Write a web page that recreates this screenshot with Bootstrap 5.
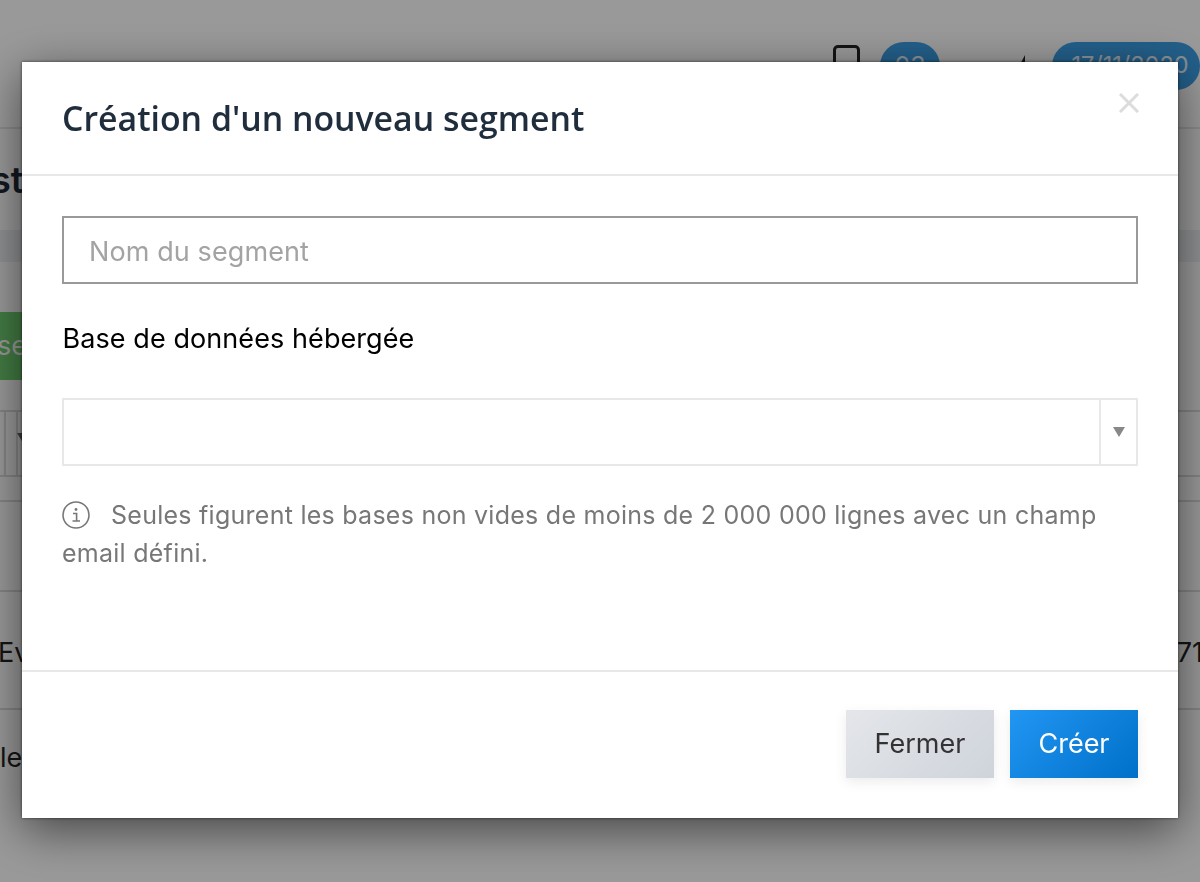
<!DOCTYPE html>
<html lang="fr">
<head>
<meta charset="utf-8">
<title>Création d'un nouveau segment</title>
<link href="https://cdn.jsdelivr.net/npm/bootstrap@5.3.0/dist/css/bootstrap.min.css" rel="stylesheet">
<style>
html, body { height: 882px; overflow: hidden; }
body { font-family: Inter, "Liberation Sans", sans-serif; background: #fff; color: #1f2937; }
.pg-wrap { width: 1200px; height: 882px; overflow: hidden; }
.pg-top { height: 129px; border-bottom: 2px solid #e5e7eb; padding-top: 42px; }
.pg-box { width: 27px; height: 30px; margin: 3px 20px 0 0; border: 3px solid #222; border-radius: 5px; }
.pg-pill { height: 48px; border-radius: 24px; background: #3b9fe6; color: #e8f2fa; font-size: 25px; line-height: 48px; text-align: center; }
.pg-count { width: 60px; margin-right: 74px; }
.pg-tick { width: 38px; height: 30px; margin-top: 10px; }
.pg-date { width: 148px; white-space: nowrap; font-size: 23.5px; padding-left: 8px; line-height: 46px; }
.pg-title { height: 101px; font-size: 36px; font-weight: 600; line-height: 50px; padding-top: 26px; text-indent: -9px; }
.pg-band { height: 32px; background: #eef0f2; }
.pg-green { width: 60px; height: 68px; margin-top: 50px; background: #6fcf70; color: #fff; font-size: 27px; line-height: 68px; text-indent: -3px; }
.pg-head { height: 67px; margin-top: 30px; padding-left: 4px; border-top: 2px solid #d9dcdf; border-bottom: 2px solid #d9dcdf; }
.pg-cell { width: 14px; height: 100%; border-left: 2px solid #d9dcdf; border-right: 2px solid #d9dcdf; }
.pg-caret { margin: 21px 0 0 -1px; }
.pg-row { font-size: 27px; color: #222; border-bottom: 2px solid #d9dcdf; }
.pg-r1 { height: 25px; }
.pg-r2 { height: 90px; }
.pg-r3 { height: 118px; line-height: 122px; }
.pg-r4 { height: 100px; line-height: 96px; border-bottom: 0; }
.pg-r3 span:first-child { margin-left: -2px; }
.pg-r3 span:last-child { margin-right: -3px; }
.modal-backdrop.scrim { --bs-backdrop-opacity: .4; z-index: 1040; }
.modal.sheet { z-index: 1050; display: block; }
.sheet .modal-dialog { max-width: none; width: 1156px; margin: 62px 22px 0; }
.sheet .modal-content { height: 756px; border: 0; border-radius: 0; box-shadow: 0 0 3px rgba(0,0,0,.6), 0 12px 44px rgba(0,0,0,.55); }
.sheet .modal-header { height: 114px; padding: 0 40px; border-bottom: 2px solid #e8e8e8; border-radius: 0; align-items: flex-start; }
.sheet-title { font-family: "Open Sans", "Liberation Sans", sans-serif; font-size: 33.85px; font-weight: 600; color: #1f2d3d; line-height: 40px; margin: 36px 0 0; }
.sheet-close { margin: 31px -1px 0 0; padding: 0; width: 20px; height: 20px; background: none; border: 0; line-height: 0; }
.sheet .modal-body { height: 494px; flex: none; padding: 40px 40px 0; }
.seg-input.form-control { height: 68px; border: 2px solid #999; border-radius: 0; font-size: 27px; padding: 2px 25px 0; color: #333; letter-spacing: .1px; }
.seg-input::placeholder { color: #a3a3a3; }
.seg-label { display: block; margin: 37px 0 0; padding-left: .5px; font-size: 27px; line-height: 36px; color: #000; letter-spacing: .08px; }
.seg-select { height: 68px; margin-top: 41px; border: 2px solid #e8e8e8; }
.seg-arrow { width: 37px; border-left: 2px solid #e8e8e8; }
.seg-note { margin: 30px 0 0; font-size: 25px; line-height: 38px; color: #777; letter-spacing: .26px; }
.seg-info { width: 28px; height: 28px; margin: 0 21px 4px 0; vertical-align: middle; }
.sheet .modal-footer { height: 148px; padding: 38px 40px 0 0; border-top: 2px solid #e8e8e8; border-radius: 0; align-items: flex-start; justify-content: flex-end; gap: 16px; flex-wrap: nowrap; }
.sheet .modal-footer .btn { margin: 0; height: 68px; border: 0; border-radius: 0; font-size: 27px; padding: 0; box-shadow: 0 4px 12px rgba(0,0,0,.08); }
.act-close { width: 148px; background: linear-gradient(135deg, #e4e6ea, #cfd4db); color: #333; }
.act-make { width: 128px; background: linear-gradient(135deg, #2196f3, #0070c9); color: #fff; }
</style>
</head>
<body>
<div class="pg-wrap">
  <div class="pg-top d-flex justify-content-end align-items-start">
    <div class="pg-box"></div>
    <div class="pg-pill pg-count">03</div>
    <svg class="pg-tick" viewBox="0 0 38 30"><path d="M2 20 11 3 11 20Z" fill="#222"/></svg>
    <div class="pg-pill pg-date">17/11/2020</div>
  </div>
  <div class="pg-title">st</div>
  <div class="pg-band"></div>
  <div class="pg-green">se</div>
  <div class="pg-head d-flex">
    <div class="pg-cell"></div>
    <svg class="pg-caret" width="12" height="10" viewBox="0 0 12 10"><path d="M0 0H12L6 10Z" fill="#666"/></svg>
  </div>
  <div class="pg-row pg-r1"></div>
  <div class="pg-row pg-r2"></div>
  <div class="pg-row pg-r3 d-flex justify-content-between"><span>Ev</span><span>71</span></div>
  <div class="pg-row pg-r4">le</div>
</div>

<div class="modal-backdrop scrim show"></div>
<div class="modal sheet show" tabindex="-1" role="dialog" aria-modal="true">
  <div class="modal-dialog">
    <div class="modal-content">
      <div class="modal-header">
        <h5 class="sheet-title">Création d'un nouveau segment</h5>
        <button type="button" class="sheet-close ms-auto" aria-label="Fermer">
          <svg width="20" height="20" viewBox="0 0 20 20"><path d="M1 1 19 19M19 1 1 19" stroke="#dcdcdc" stroke-width="3" fill="none"/></svg>
        </button>
      </div>
      <div class="modal-body">
        <input class="form-control seg-input" type="text" placeholder="Nom du segment">
        <label class="seg-label">Base de données hébergée</label>
        <div class="seg-select d-flex justify-content-end">
          <div class="seg-arrow d-flex align-items-center justify-content-center">
            <svg width="12" height="10" viewBox="0 0 12 10"><path d="M0 0H12L6 10Z" fill="#888"/></svg>
          </div>
        </div>
        <p class="seg-note"><svg class="seg-info" viewBox="0 0 28 28"><circle cx="14" cy="14" r="13" fill="none" stroke="#777" stroke-width="1.6"/><circle cx="14" cy="8.5" r="1.4" fill="#777"/><path d="M11 12.5h3.6v7.5M10.5 20h7.5" fill="none" stroke="#777" stroke-width="1.6"/></svg>Seules figurent les bases non vides de moins de 2 000 000 lignes avec un champ email défini.</p>
      </div>
      <div class="modal-footer">
        <button type="button" class="btn act-close">Fermer</button>
        <button type="button" class="btn act-make">Créer</button>
      </div>
    </div>
  </div>
</div>
<script src="https://cdn.jsdelivr.net/npm/bootstrap@5.3.0/dist/js/bootstrap.bundle.min.js"></script>
</body>
</html>
